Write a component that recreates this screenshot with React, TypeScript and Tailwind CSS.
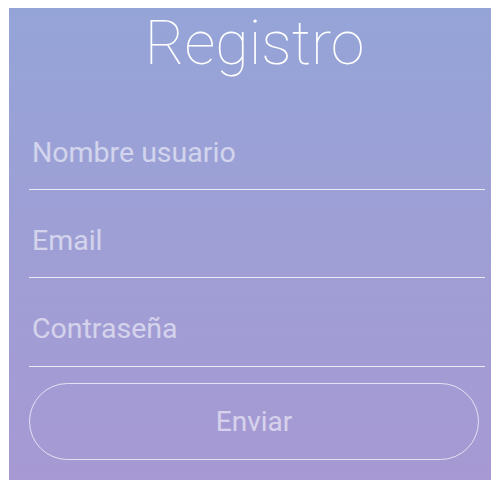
import React from 'react';

const fields = ['Nombre usuario', 'Email', 'Contraseña'];

export default function App() {
  return (
    <div className="h-screen bg-white pl-[9px] pt-[8px] font-['Roboto',sans-serif] overflow-hidden">
      {/* Register card */}
      <form
        onSubmit={(e) => e.preventDefault()}
        className="h-[480px] bg-gradient-to-b from-[#95a4d7] to-[#a799d3] pl-[20px] pr-[6px] pt-[5px]"
      >
        <h1 className="text-center text-[61px] leading-none font-thin text-white mr-[5px] mb-[28px]">Registro</h1>

        {fields.map((label, i) => (
          <input
            key={label}
            type={label === 'Contraseña' ? 'password' : 'text'}
            placeholder={label}
            className={
              'block w-full pt-[13px] px-[3px] bg-transparent border-b border-white/80 text-[28.5px] text-white outline-none placeholder:text-white/55 ' +
              (i === 2 ? 'h-[89px]' : 'h-[88px]')
            }
          />
        ))}

        <button
          type="submit"
          className="mt-[16px] w-[450px] h-[77px] rounded-full border border-white/70 text-[28px] text-white/55"
        >
          Enviar
        </button>
      </form>
    </div>
  );
}
